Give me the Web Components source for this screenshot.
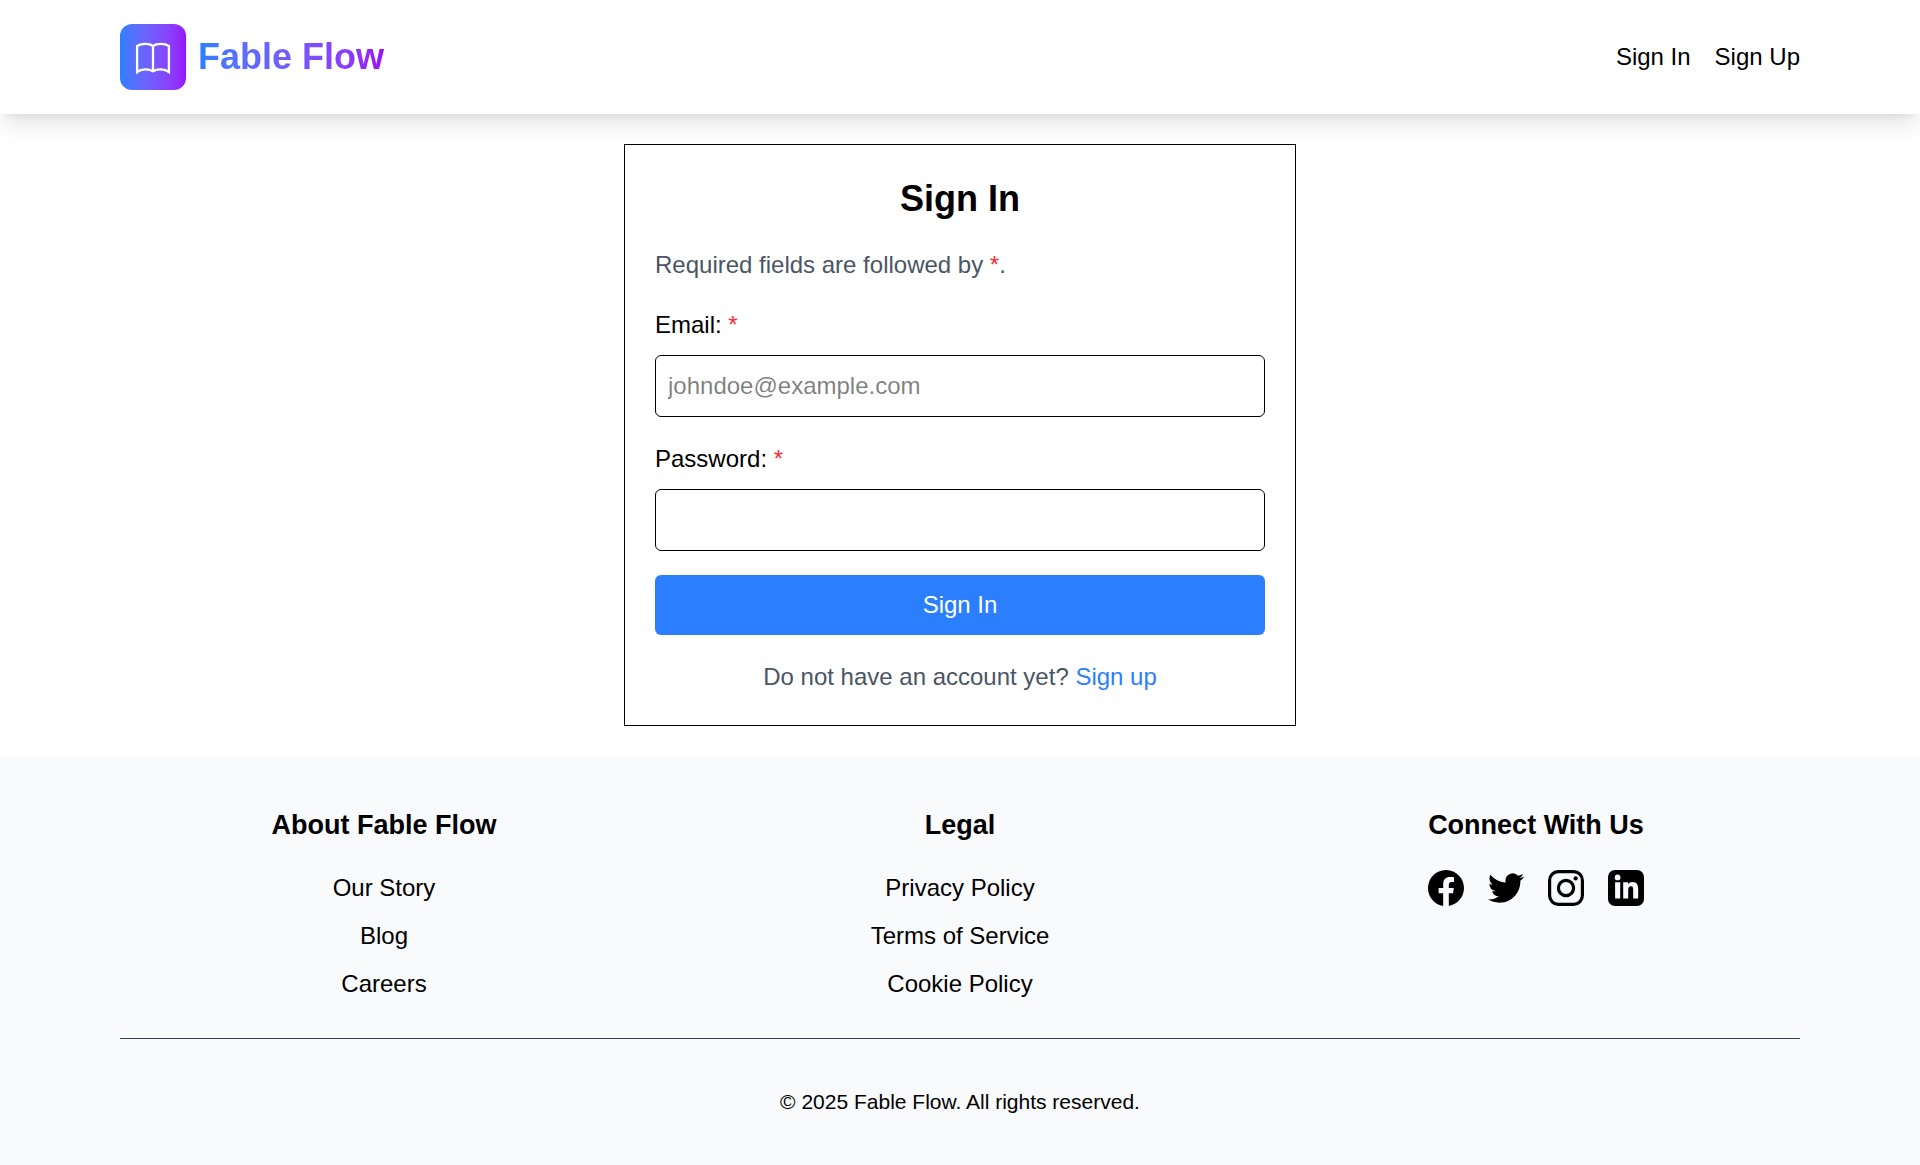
<!DOCTYPE html>
<html lang="en">
<head>
<meta charset="utf-8">
<title>Fable Flow</title>
<style>
  body { margin: 0; min-height: 100vh; display: flex; flex-direction: column; font: 24px/36px "Liberation Sans", Arial, sans-serif; color: #000; background: #fff; }
  main { flex: 1; padding: 30px; display: flex; justify-content: center; align-items: flex-start; }
</style>
</head>
<body>
<site-header>
  <nav-link>Sign In</nav-link>
  <nav-link>Sign Up</nav-link>
</site-header>
<main>
  <sign-in-card heading="Sign In">
    <form-field type="email" placeholder="johndoe@example.com">Email:</form-field>
    <form-field type="password">Password:</form-field>
  </sign-in-card>
</main>
<site-footer>
  <footer-column heading="About Fable Flow">
    <nav-link>Our Story</nav-link><nav-link>Blog</nav-link><nav-link>Careers</nav-link>
  </footer-column>
  <footer-column heading="Legal">
    <nav-link>Privacy Policy</nav-link><nav-link>Terms of Service</nav-link><nav-link>Cookie Policy</nav-link>
  </footer-column>
  <footer-column heading="Connect With Us">
    <social-links></social-links>
  </footer-column>
</site-footer>
<script>
const define = (name, render) => customElements.define(name, class extends HTMLElement {
  constructor() { super(); this.attachShadow({ mode: 'open' }); }
  connectedCallback() { this.shadowRoot.innerHTML = render(this); }
});

define('nav-link', () => `
<style>:host{display:block} a{color:inherit;text-decoration:none;display:block}</style>
<a href="#"><slot></slot></a>`);

define('brand-logo', () => `
<style>
:host{display:flex;align-items:center;gap:12px;--g:linear-gradient(to right in oklab,#2b7fff,#9810fa)}
.tile{width:66px;height:66px;border-radius:12px;background:var(--g);display:flex}
svg{width:66px;height:66px}
span{font-size:36px;line-height:48px;font-weight:700;background:var(--g);-webkit-background-clip:text;background-clip:text;color:transparent}
</style>
<div class="tile"><svg viewBox="0 0 66 66" fill="none" stroke="#fff" stroke-width="2.3"><path d="M17.1 48V21.9C21.2 19.4 29.3 19.2 33 22C36.7 19.2 44.8 19.4 48.9 21.9V48C44.8 44.6 36.7 44.5 33 47.3C29.3 44.5 21.2 44.6 17.1 48ZM33 22V47"/></svg></div>
<span>Fable Flow</span>`);

define('site-header', () => `
<style>
:host{display:block;position:relative;background:#fff;box-shadow:0 15px 22.5px -4.5px rgba(0,0,0,.1),0 6px 9px -6px rgba(0,0,0,.1)}
header{display:flex;justify-content:space-between;align-items:center;padding:24px 120px}
nav{display:flex;gap:24px}
</style>
<header><brand-logo></brand-logo><nav><slot></slot></nav></header>`);

define('form-field', el => `
<style>
:host{display:flex;flex-direction:column;gap:12px}
i{font-style:normal;color:#fb2c36}
input{box-sizing:border-box;width:100%;height:62px;margin:0;padding:12px;border:1px solid #000;border-radius:6px;font:inherit;background:transparent;outline:0}
input::placeholder{color:rgba(0,0,0,.5)}
</style>
<label for="f"><slot></slot> <i>*</i></label>
<input id="f" type="${el.getAttribute('type')}" placeholder="${el.getAttribute('placeholder') || ''}">`);

define('sign-in-card', el => `
<style>
:host{display:block;box-sizing:border-box;width:672px;border:1px solid #000;padding:30px}
form{display:flex;flex-direction:column;gap:24px}
h1{margin:0;font-size:36px;line-height:48px;text-align:center}
p{margin:0;color:#4a5565}
i{font-style:normal;color:#fb2c36}
button{border:0;border-radius:6px;padding:12px;background:#2b7fff;color:#fff;font:inherit}
.alt{text-align:center} a{color:#2b7fff;text-decoration:none}
</style>
<form>
<h1>${el.getAttribute('heading')}</h1>
<p>Required fields are followed by <i>*</i>.</p>
<slot></slot>
<button type="button">Sign In</button>
<p class="alt">Do not have an account yet? <a href="#">Sign up</a></p>
</form>`);

define('footer-column', el => `
<style>
:host{display:flex;flex-direction:column;align-items:center;gap:24px}
h3{margin:0;font-size:27px;line-height:42px}
div{display:flex;flex-direction:column;align-items:center;gap:12px}
</style>
<h3>${el.getAttribute('heading')}</h3><div><slot></slot></div>`);

define('social-links', () => `
<style>:host{display:flex;gap:24px} a{display:block;height:36px;color:inherit} svg{display:block;width:36px;height:36px;fill:currentColor}</style>
<a href="#" aria-label="Facebook"><svg viewBox="0 0 16 16"><path d="M16 8.049c0-4.446-3.582-8.05-8-8.05C3.58 0-.002 3.603-.002 8.05c0 4.017 2.926 7.347 6.75 7.951v-5.625h-2.03V8.05H6.75V6.275c0-2.017 1.195-3.131 3.022-3.131.876 0 1.791.157 1.791.157v1.98h-1.009c-.993 0-1.303.621-1.303 1.258v1.51h2.218l-.354 2.326H9.25V16c3.824-.604 6.75-3.934 6.75-7.951"/></svg></a>
<a href="#" aria-label="Twitter"><svg viewBox="0 0 24 24"><path d="M23.953 4.57a10 10 0 01-2.825.775 4.958 4.958 0 002.163-2.723c-.951.555-2.005.959-3.127 1.184a4.92 4.92 0 00-8.384 4.482C7.69 8.095 4.067 6.13 1.64 3.162a4.822 4.822 0 00-.666 2.475c0 1.71.87 3.213 2.188 4.096a4.904 4.904 0 01-2.228-.616v.06a4.923 4.923 0 003.946 4.827 4.996 4.996 0 01-2.212.085 4.936 4.936 0 004.604 3.417 9.867 9.867 0 01-6.102 2.105c-.39 0-.779-.023-1.17-.067a13.995 13.995 0 007.557 2.209c9.053 0 13.998-7.496 13.998-13.985 0-.21 0-.42-.015-.63A9.935 9.935 0 0024 4.59z"/></svg></a>
<a href="#" aria-label="Instagram"><svg viewBox="0 0 36 36"><rect x="1.6" y="1.6" width="32.8" height="32.8" rx="8.8" fill="none" stroke="currentColor" stroke-width="3.2"/><circle cx="18" cy="18" r="7.6" fill="none" stroke="currentColor" stroke-width="3.2"/><circle cx="27.6" cy="8.4" r="2.15"/></svg></a>
<a href="#" aria-label="LinkedIn"><svg viewBox="0 0 36 36"><path fill-rule="evenodd" d="M7 0H29A7 7 0 0 1 36 7V29A7 7 0 0 1 29 36H7A7 7 0 0 1 0 29V7A7 7 0 0 1 7 0ZM9.6 4.5A2.9 2.9 0 1 0 9.6 10.3A2.9 2.9 0 1 0 9.6 4.5ZM7.1 12.3V28.5H12.2V12.3ZM15.2 12.3V28.5H20.2V20.5C20.2 18.2 20.8 16.2 23 16.2C25.1 16.2 25.2 18.3 25.2 20.6V28.5H30.2V19.6C30.2 15.2 29.2 11.9 24.3 11.9C22 11.9 20.6 13.1 20 14.4V12.3Z"/></svg></a>`);

define('site-footer', () => `
<style>
:host{display:block;background:#f9fafc;padding:48px 120px}
.cols{display:grid;grid-template-columns:repeat(3,1fr);gap:48px}
p{margin:36px 0 0;border-top:1px solid #364153;padding-top:48px;text-align:center;font-size:21px;line-height:30px}
</style>
<div class="cols"><slot></slot></div>
<p>© 2025 Fable Flow. All rights reserved.</p>`);
</script>
</body>
</html>
